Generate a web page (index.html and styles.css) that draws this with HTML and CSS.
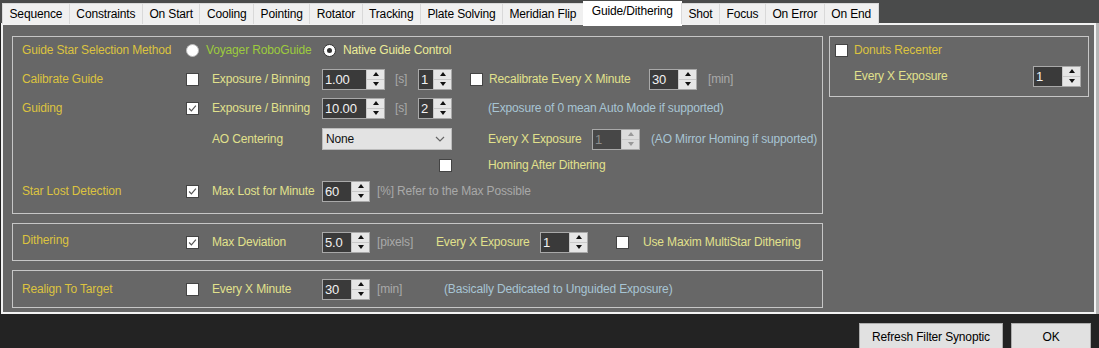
FILE: index.html
```html
<!DOCTYPE html>
<html lang="en">
<head>
    <meta charset="UTF-8">
    <title>Guide/Dithering</title>
    <link rel="stylesheet" href="styles.css">
</head>
<body>
<!-- Tabs -->
<div class="tab-strip">
    <div class="tab">Sequence</div>
    <div class="tab">Constraints</div>
    <div class="tab">On Start</div>
    <div class="tab">Cooling</div>
    <div class="tab">Pointing</div>
    <div class="tab">Rotator</div>
    <div class="tab">Tracking</div>
    <div class="tab">Plate Solving</div>
    <div class="tab">Meridian Flip</div>
    <div class="tab active">Guide/Dithering</div>
    <div class="tab">Shot</div>
    <div class="tab">Focus</div>
    <div class="tab">On Error</div>
    <div class="tab">On End</div>
</div>

<!-- Panel -->
<div class="panel">
    <div class="left-col">
        <div class="group g-guide">
            <div class="row r1">
                <span class="lbl c-lbl">Guide Star Selection Method</span>
                <span class="radio-opt first">
                    <span class="radio"></span>
                    <span class="green">Voyager RoboGuide</span>
                </span>
                <span class="radio-opt">
                    <span class="radio on"></span>
                    <span class="pale">Native Guide Control</span>
                </span>
            </div>
            <div class="row r2">
                <span class="lbl c-lbl">Calibrate Guide</span>
                <span class="c-chk"><span class="chk"></span></span>
                <span class="sub c-sub">Exposure / Binning</span>
                <span class="num w63"><span class="val">1.00</span><span class="spin"><i class="up"></i><i class="dn"></i></span></span>
                <span class="unit u-s">[s]</span>
                <span class="num w34"><span class="val">1</span><span class="spin"><i class="up"></i><i class="dn"></i></span></span>
                <span class="chk m-recal"></span>
                <span class="sub t-recal">Recalibrate Every X Minute</span>
                <span class="num w48"><span class="val">30</span><span class="spin"><i class="up"></i><i class="dn"></i></span></span>
                <span class="unit m-unit">[min]</span>
            </div>
            <div class="row r3">
                <span class="lbl c-lbl">Guiding</span>
                <span class="c-chk"><span class="chk checked"><svg viewBox="0 0 13 13"><polyline points="2.5,6.5 5.2,9.3 10.5,3.2"/></svg></span></span>
                <span class="sub c-sub">Exposure / Binning</span>
                <span class="num w63"><span class="val">10.00</span><span class="spin"><i class="up"></i><i class="dn"></i></span></span>
                <span class="unit u-s">[s]</span>
                <span class="num w34"><span class="val">2</span><span class="spin"><i class="up"></i><i class="dn"></i></span></span>
                <span class="info m-info">(Exposure of 0 mean Auto Mode if supported)</span>
            </div>
            <div class="row r4">
                <span class="c-lbl"></span>
                <span class="c-chk"></span>
                <span class="sub c-sub">AO Centering</span>
                <span class="select">None<svg viewBox="0 0 10 6"><polyline points="1,1 5,5 9,1"/></svg></span>
                <span class="sub m-info t-every">Every X Exposure</span>
                <span class="num w48 disabled"><span class="val">1</span><span class="spin"><i class="up"></i><i class="dn"></i></span></span>
                <span class="info m-unit">(AO Mirror Homing if supported)</span>
            </div>
            <div class="row r5">
                <span class="c-lbl"></span>
                <span class="c-chk"></span>
                <span class="c-sub"></span>
                <span class="c-select"><span class="chk"></span></span>
                <span class="sub m-info">Homing After Dithering</span>
            </div>
            <div class="row r6">
                <span class="lbl c-lbl">Star Lost Detection</span>
                <span class="c-chk"><span class="chk checked"><svg viewBox="0 0 13 13"><polyline points="2.5,6.5 5.2,9.3 10.5,3.2"/></svg></span></span>
                <span class="sub c-sub">Max Lost for Minute</span>
                <span class="num w48"><span class="val">60</span><span class="spin"><i class="up"></i><i class="dn"></i></span></span>
                <span class="unit m-small">[%] Refer to the Max Possible</span>
            </div>
        </div>

        <div class="group g-single">
            <div class="row r-single">
                <span class="lbl c-lbl lift">Dithering</span>
                <span class="c-chk"><span class="chk checked"><svg viewBox="0 0 13 13"><polyline points="2.5,6.5 5.2,9.3 10.5,3.2"/></svg></span></span>
                <span class="sub c-sub">Max Deviation</span>
                <span class="num w48"><span class="val">5.0</span><span class="spin"><i class="up"></i><i class="dn"></i></span></span>
                <span class="unit m-small t-pixels">[pixels]</span>
                <span class="sub t-every">Every X Exposure</span>
                <span class="num w48"><span class="val">1</span><span class="spin"><i class="up"></i><i class="dn"></i></span></span>
                <span class="chk m-maxim"></span>
                <span class="sub m-maxim-t">Use Maxim MultiStar Dithering</span>
            </div>
        </div>

        <div class="group g-single">
            <div class="row r-single">
                <span class="lbl c-lbl">Realign To Target</span>
                <span class="c-chk"><span class="chk"></span></span>
                <span class="sub c-sub">Every X Minute</span>
                <span class="num w48"><span class="val">30</span><span class="spin"><i class="up"></i><i class="dn"></i></span></span>
                <span class="unit m-small t-min">[min]</span>
                <span class="info">(Basically Dedicated to Unguided Exposure)</span>
            </div>
        </div>
    </div>

    <div class="right-col">
        <div class="group g-donuts">
            <div class="row r-d1">
                <span class="chk"></span>
                <span class="lbl m-donuts">Donuts Recenter</span>
            </div>
            <div class="row r-d2">
                <span class="sub t-donuts">Every X Exposure</span>
                <span class="num w48"><span class="val">1</span><span class="spin"><i class="up"></i><i class="dn"></i></span></span>
            </div>
        </div>
    </div>
</div>

<!-- Bottom buttons -->
<div class="bottom-bar">
    <button class="btn btn-refresh">Refresh Filter Synoptic</button>
    <button class="btn btn-ok">OK</button>
</div>
</body>
</html>
```

FILE: styles.css
```css
/* General */
body {
    margin: 0;
    width: 1099px;
    height: 348px;
    overflow: hidden;
    background: #232323;
    font-family: 'Liberation Sans', Arial, sans-serif;
    font-size: 12px;
    letter-spacing: -0.15px;
}

/* Tabs */
.tab-strip {
    display: flex;
    height: 23px;
    padding: 3px 0 0 3px;
    box-sizing: border-box;
    background: #4a4b4b;
    position: relative;
    z-index: 1;
}

.tab {
    height: 20px;
    padding: 0 6.5px;
    line-height: 20px;
    background: #f0f0f0;
    border: 1px solid #d9d9d9;
    border-bottom: none;
    margin-left: -1px;
    color: #000;
    white-space: nowrap;
}

.tab.active {
    background: #fff;
    height: 24px;
    margin-top: -2px;
    line-height: 19px;
    padding: 0 8px;
    border-color: #fff;
}

/* Panel */
.panel {
    display: flex;
    align-items: flex-start;
    gap: 6px;
    width: 1095px;
    margin-left: 1px;
    padding: 11px 0 4px 9px;
    box-sizing: border-box;
    background: #676767;
    border: 2px solid #f2f2f2;
    box-shadow: 3px 0 0 #b6b6b6;
}

.left-col {
    width: 811px;
    display: flex;
    flex-direction: column;
    gap: 9px;
}

.right-col {
    width: 260px;
}

.group {
    border: 1px solid #c6c6c6;
}

.g-guide {
    padding: 0 0 4px 9px;
}

.g-single {
    padding-left: 9px;
}

.g-donuts {
    padding: 0 0 7px 5px;
}

.row {
    display: flex;
    align-items: center;
    white-space: nowrap;
}

.r1 { height: 26px; }
.r2 { height: 32px; }
.r3 { height: 26px; }
.r4 { height: 36px; }
.r5 { height: 16px; }
.r6 { height: 36px; }
.r-single { height: 36px; }
.r-d1 { height: 26px; }
.r-d2 { height: 26px; }

/* Columns */
.c-lbl { width: 164px; }
.c-chk { width: 26px; display: flex; }
.c-sub { width: 110px; }
.c-select { width: 130px; display: flex; justify-content: flex-end; }

/* Text colours */
.lbl { color: #dcc33f; }
.sub { color: #e1e18c; }
.pale { color: #ebeb98; }
.green { color: #9dcb3d; }
.info { color: #a7c5d4; }
.unit { color: #a9a9a9; }

.lift { position: relative; top: -2px; }

/* Radio */
.radio-opt {
    display: flex;
    align-items: center;
    gap: 7px;
}

.radio-opt.first { width: 137px; }

.radio {
    width: 11px;
    height: 11px;
    border: 1px solid #bbb;
    border-radius: 50%;
    background: #fff;
    position: relative;
}

.radio.on {
    border-color: #333;
}

.radio.on::after {
    content: "";
    position: absolute;
    left: 3px;
    top: 3px;
    width: 5px;
    height: 5px;
    border-radius: 50%;
    background: #333;
}

/* Checkbox */
.chk {
    display: block;
    width: 11px;
    height: 11px;
    border: 1px solid #444;
    background: #fff;
    flex: none;
}

.chk svg {
    display: block;
    width: 11px;
    height: 11px;
}

.chk polyline {
    fill: none;
    stroke: #555;
    stroke-width: 1.4;
}

/* Numeric up/down */
.num {
    display: flex;
    height: 21px;
    border: 1px solid #a9a9a9;
    box-sizing: border-box;
    flex: none;
}

.w63 { width: 63px; }
.w48 { width: 48px; }
.w34 { width: 34px; }

.num .val {
    flex: 1;
    background: #3a3a3a;
    color: #f2f2f2;
    padding-left: 2px;
    font-size: 13px;
    line-height: 19px;
}

.num .spin {
    width: 17px;
    display: flex;
    flex-direction: column;
    background: #e6e6e6;
    border-left: 1px solid #c9c9c9;
}

.num .spin i {
    flex: 1;
    display: flex;
    align-items: center;
    justify-content: center;
}

.num .spin i.up {
    border-bottom: 1px solid #c9c9c9;
}

.num .spin i.up::after {
    content: "";
    border-left: 3px solid transparent;
    border-right: 3px solid transparent;
    border-bottom: 4px solid #111;
}

.num .spin i.dn::after {
    content: "";
    border-left: 3px solid transparent;
    border-right: 3px solid transparent;
    border-top: 4px solid #111;
}

.num.disabled .val {
    background: #474747;
    color: #8c8c8c;
}

.num.disabled .spin {
    background: #dcdcdc;
}

.num.disabled .spin i.up::after { border-bottom-color: #999; }
.num.disabled .spin i.dn::after { border-top-color: #999; }

/* Dropdown */
.select {
    width: 130px;
    height: 22px;
    box-sizing: border-box;
    display: flex;
    align-items: center;
    justify-content: space-between;
    padding: 0 6px 0 3px;
    background: #e3e3e3;
    border: 1px solid #bcbcbc;
    color: #111;
}

.select svg {
    width: 10px;
    height: 6px;
}

.select polyline {
    fill: none;
    stroke: #666;
    stroke-width: 1.2;
}

/* Offsets between row items */
.u-s { margin-left: 10px; width: 23px; }
.m-recal { margin-left: 18px; }
.t-recal { margin-left: 6px; width: 160px; }
.m-unit { margin-left: 11px; }
.m-info { margin-left: 36px; }
.t-every { width: 104px; }
.m-small { margin-left: 7px; }
.t-pixels { width: 59px; }
.t-min { width: 67px; }
.m-maxim { margin-left: 28px; }
.m-maxim-t { margin-left: 14px; }
.m-donuts { margin-left: 6px; }
.t-donuts { margin-left: 19px; width: 179px; }

/* Bottom buttons */
.bottom-bar {
    display: flex;
    justify-content: flex-end;
    gap: 8px;
    padding: 9px 8px 0 0;
}

.btn {
    height: 27px;
    background: #e1e1e1;
    border: 1px solid #adadad;
    font-family: 'Liberation Sans', Arial, sans-serif;
    font-size: 12px;
    letter-spacing: -0.15px;
    color: #000;
    padding: 0;
}

.btn-refresh { width: 144px; }
.btn-ok { width: 80px; }
```
